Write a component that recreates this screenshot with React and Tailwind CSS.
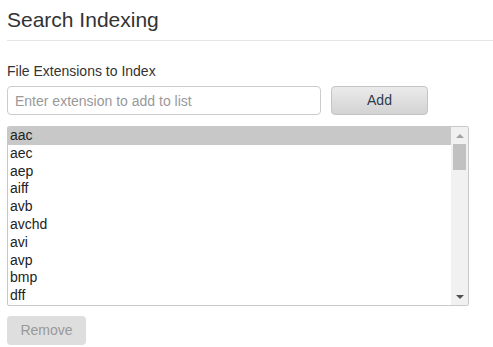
import { useState } from 'react'

const EXTENSIONS = ['aac', 'aec', 'aep', 'aiff', 'avb', 'avchd', 'avi', 'avp', 'bmp', 'dff']

export default function App() {
  const [selected, setSelected] = useState(0)
  const [value, setValue] = useState('')

  return (
    <div className="w-[493px] h-[347px] bg-white pl-[7px] text-[#333] font-['Liberation_Sans',Arial,sans-serif] overflow-hidden">
      <h2 className="pt-[8px] text-[21px] leading-[24px] text-[#333]">Search Indexing</h2>
      <div className="mt-[8px] h-px bg-[#e5e5e5]" />

      <div className="mt-[22px] text-[14px] leading-[16px]">File Extensions to Index</div>

      {/* input + add */}
      <div className="mt-[7px] flex gap-[10px]">
        <input
          value={value}
          onChange={(e) => setValue(e.target.value)}
          placeholder="Enter extension to add to list"
          className="w-[314px] h-[29px] px-[7px] border border-[#ccc] rounded-[4px] text-[14px] text-[#555] placeholder:text-[#999] outline-none"
        />
        <button className="w-[97px] h-[29px] rounded-[4px] border border-[#c4c4c4] bg-gradient-to-b from-[#ebebeb] to-[#d3d3d3] text-[14px] text-[#2f3b4c]">
          Add
        </button>
      </div>

      {/* list box */}
      <div className="mt-[11px] w-[462px] h-[180px] flex border border-[#c9c9c9] rounded-[2px] overflow-hidden">
        <div className="flex-1">
          {EXTENSIONS.map((ext, i) => (
            <div
              key={ext}
              onClick={() => setSelected(i)}
              className={`h-[17.8px] px-[2px] text-[14px] leading-[17px] text-[#222] ${
                i === selected ? 'bg-[#c8c8c8]' : ''
              }`}
            >
              {ext}
            </div>
          ))}
        </div>
        {/* scrollbar */}
        <div className="w-[17px] bg-[#f1f1f1] flex flex-col items-center">
          <div className="h-[17px] flex items-center justify-center">
            <svg width="8" height="4" viewBox="0 0 8 4"><path d="M0 4 L4 0 L8 4 Z" fill="#a3a3a3" /></svg>
          </div>
          <div className="w-[13px] h-[26px] bg-[#c1c1c1]" />
          <div className="flex-1" />
          <div className="h-[17px] flex items-center justify-center">
            <svg width="8" height="4" viewBox="0 0 8 4"><path d="M0 0 L8 0 L4 4 Z" fill="#505050" /></svg>
          </div>
        </div>
      </div>

      <button className="mt-[10px] w-[79px] h-[29px] rounded-[4px] bg-[#dedede] text-[14px] text-[#999] cursor-not-allowed">
        Remove
      </button>
    </div>
  )
}
